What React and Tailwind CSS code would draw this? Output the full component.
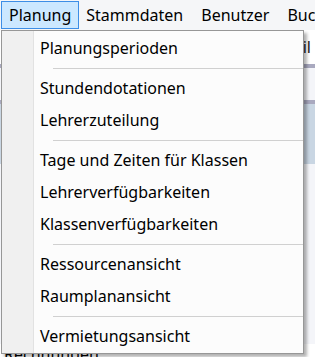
const groups = [
  ['Planungsperioden'],
  ['Stundendotationen', 'Lehrerzuteilung'],
  ['Tage und Zeiten für Klassen', 'Lehrerverfügbarkeiten', 'Klassenverfügbarkeiten'],
  ['Ressourcenansicht', 'Raumplanansicht'],
  ['Vermietungsansicht'],
];

function MenuItem({ label }) {
  return (
    <div className="h-[32px] flex items-center pl-[38px] text-[16px] text-black">
      {label}
    </div>
  );
}

function Separator() {
  return (
    <div className="h-[8px] flex items-center pl-[51px]">
      <div className="h-px w-full bg-[#d0d0d0]" />
    </div>
  );
}

export default function App() {
  return (
    <div
      className="relative w-[315px] h-[357px] overflow-hidden bg-[#f0f0f0]"
      style={{ fontFamily: '"Noto Sans", "Open Sans", sans-serif' }}
    >
      {/* Menu bar */}
      <div className="h-[30px] flex items-center bg-[#f5f6f8] text-[16px] text-black">
        <div className="ml-px h-[28px] flex items-center px-[7px] bg-[#cce8ff] border border-[#3d8ee6]">
          Planung
        </div>
        <div className="pl-[7px] pr-[9px]">Stammdaten</div>
        <div className="px-[9px]">Benutzer</div>
        <div className="px-[9px]">Buchhaltung</div>
      </div>

      {/* Window content behind the menu */}
      <div className="flex flex-col">
        <div className="h-[34px] bg-white flex items-center justify-end pr-1 text-[16px] text-[#1a1a1a]">
          Profil
        </div>
        <div className="h-[4px] bg-[#a9a9bf]" />
        <div className="h-[32px] bg-[#f4f5f9]" />
        <div className="h-[4px] bg-[#a9a9bf]" />
        <div className="h-[60px] bg-[#c9d6e3]" />
        <div className="h-[180px] bg-[#f4f5f9]" />
        <div className="h-[20px] bg-white pl-1 text-[16px] leading-[20px] text-black">Rechnungen</div>
      </div>

      {/* Dropdown */}
      <div className="absolute left-px top-[30px] w-[303px] border border-[#979797] bg-[#fcfcfc] shadow-[3px_3px_3px_rgba(0,0,0,0.3)]">
        <div className="absolute left-0 top-0 bottom-0 w-[32px] bg-[#f0f0f0] border-r border-[#e2e2e2]" />
        <div className="relative py-px">
          {groups.map((g, i) => (
            <div key={i}>
              {i > 0 && <Separator />}
              {g.map((label) => (
                <MenuItem key={label} label={label} />
              ))}
            </div>
          ))}
        </div>
      </div>
    </div>
  );
}
